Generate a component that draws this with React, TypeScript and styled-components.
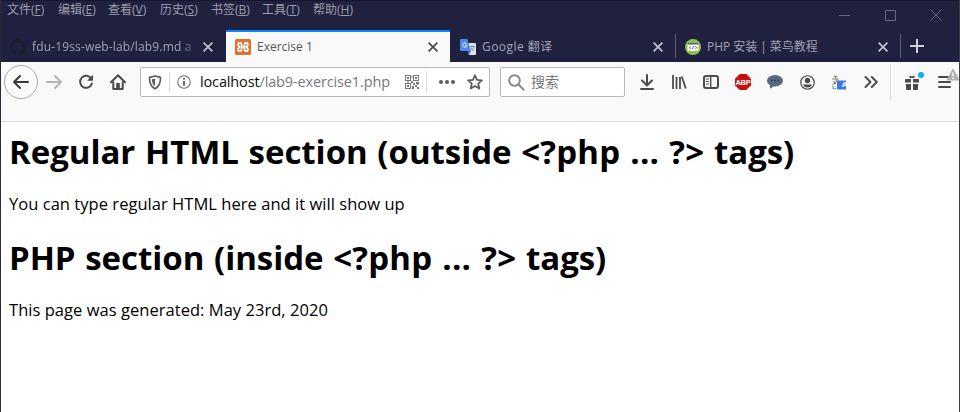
import React from 'react';
import styled, { createGlobalStyle } from 'styled-components';

const latin = '"Open Sans", "Noto Sans CJK SC", sans-serif';

const GlobalStyle = createGlobalStyle`
  body { margin: 0; background: #fff; font-family: ${latin}; overflow: hidden; }
  * { box-sizing: border-box; }
`;

const Window = styled.div`
  width: 960px;
  height: 412px;
  display: flex;
  flex-direction: column;
  background: #fff;
  border-left: 1px solid #2b2a38;
  border-right: 1px solid #3c3b48;
  overflow: hidden;
`;

const TitleBar = styled.div`
  height: 30px;
  display: flex;
  justify-content: space-between;
  background: #20213f;
  border-top: 1px solid #15162e;
`;

const MenuList = styled.div`
  display: flex;
  padding-left: 6px;
`;

const MenuItem = styled.span<{ $w: number }>`
  width: ${(p) => p.$w}px;
  height: 20px;
  line-height: 18px;
  font-size: 12px;
  color: #9d9dab;
  white-space: nowrap;
  u { text-underline-offset: 1px; }
`;

const WindowButtons = styled.div`
  display: flex;
  padding-top: 6px;
`;

const WindowButton = styled.div`
  width: 46px;
  height: 16px;
  display: flex;
  align-items: center;
  justify-content: center;
`;

const TabStrip = styled.div`
  height: 32px;
  display: flex;
  background: #20213f;
`;

const Tab = styled.div<{ $w: number; $active?: boolean; $divider?: boolean; $pl?: number }>`
  width: ${(p) => p.$w}px;
  height: 32px;
  display: flex;
  align-items: center;
  padding: 0 ${(p) => (p.$active ? 8 : 9)}px 0 ${(p) => p.$pl ?? 9}px;
  position: relative;
  background: ${(p) => (p.$active ? '#f9f9fa' : '#20213f')};
  color: ${(p) => (p.$active ? '#55555c' : '#a2a3b5')};
  border-top: 2px solid ${(p) => (p.$active ? '#0a84ff' : 'transparent')};
  ${(p) =>
    p.$divider &&
    `&::after { content: ''; position: absolute; right: 0; top: 2px; width: 1px; height: 24px; background: #5f6078; }`}
`;

const TabTitle = styled.span<{ $ls?: number; $fade?: boolean }>`
  flex: 1;
  min-width: 0;
  margin-left: 6px;
  font-size: 12px;
  line-height: 18px;
  letter-spacing: ${(p) => p.$ls ?? 0}px;
  white-space: nowrap;
  ${(p) => p.$fade && 'mask-image: linear-gradient(to right, #000 148px, transparent 168px);'}
`;

const CloseBox = styled.span`
  width: 18px;
  height: 18px;
  display: flex;
  align-items: center;
  justify-content: center;
`;

const NewTab = styled.div`
  width: 32px;
  display: flex;
  align-items: center;
  justify-content: center;
`;

const Toolbar = styled.div`
  height: 60px;
  display: flex;
  align-items: flex-start;
  background: #f9f9fa;
  border-bottom: 1px solid #dcdcde;
  padding-left: 3px;
`;

const ToolButton = styled.div<{ $w?: number }>`
  position: relative;
  flex: none;
  width: ${(p) => p.$w ?? 32}px;
  height: 40px;
  display: flex;
  align-items: center;
  justify-content: center;
`;

const BackCircle = styled.div`
  flex: none;
  width: 34px;
  height: 34px;
  border-radius: 50%;
  border: 1px solid #a9a9ab;
  background: #fcfcfc;
  display: flex;
  align-items: center;
  justify-content: center;
`;

const Field = styled.div<{ $w: number; $ml: number }>`
  flex: none;
  width: ${(p) => p.$w}px;
  height: 30px;
  margin: 5px 0 0 ${(p) => p.$ml}px;
  display: flex;
  align-items: center;
  background: #fff;
  border: 1px solid #b9b9bb;
  border-radius: 2px;
`;

const Slot = styled.span<{ $w: number; $pad?: number }>`
  flex: none;
  width: ${(p) => p.$w}px;
  padding-left: ${(p) => p.$pad ?? 0}px;
  display: flex;
  justify-content: center;
`;

const Divider = styled.span<{ $h: number }>`
  flex: none;
  width: 1px;
  height: ${(p) => p.$h}px;
  background: #dadadc;
`;

const Address = styled.span`
  flex: 1;
  min-width: 0;
  padding-left: 2px;
  font-size: 14.5px;
  line-height: 20px;
  letter-spacing: -0.14px;
  white-space: nowrap;
  color: #77777b;
  b { font-weight: 400; color: #0c0c0d; }
`;

const SearchHint = styled.span`
  font-size: 14px;
  line-height: 20px;
  color: #77777b;
`;

const Badge = styled.span`
  position: absolute;
  right: 5px;
  top: 10px;
  width: 6px;
  height: 6px;
  border-radius: 50%;
  background: #00b3f4;
`;

const Warning = styled.span`
  position: absolute;
  right: 0;
  top: 5px;
  height: 14px;
  display: flex;
`;

const Page = styled.main`
  flex: 1;
  padding: 0 8px;
  color: #000;
`;

const Heading = styled.h1<{ $mt: number }>`
  margin: ${(p) => p.$mt}px 0 0;
  font-size: 33px;
  line-height: 42px;
  font-weight: 700;
  letter-spacing: -0.05px;
  word-spacing: 1.2px;
  white-space: nowrap;
`;

const Code = styled.span`
  letter-spacing: 0.22px;
`;

const Para = styled.p<{ $mt: number }>`
  margin: ${(p) => p.$mt}px 0 0;
  font-size: 16.5px;
  line-height: 22px;
  letter-spacing: 0.04px;
  white-space: nowrap;
`;

const ink = '#4a4a4e';

const Close = ({ color }: { color: string }) => (
  <svg width="10" height="10" viewBox="0 0 10 10" fill="none" stroke={color} strokeWidth="1.7">
    <path d="M.6.6l8.8 8.8M9.4.6L.6 9.4" />
  </svg>
);

const Arrow = ({ color, flip }: { color: string; flip?: boolean }) => (
  <svg width="16" height="16" viewBox="0 0 16 16" fill="none" stroke={color} strokeWidth="2" strokeLinecap="round" strokeLinejoin="round">
    <path d={flip ? 'M1 8h14M9 2l6 6-6 6' : 'M15 8H1M7 2L1 8l6 6'} />
  </svg>
);

const GitHubIcon = () => (
  <svg width="16" height="16" viewBox="0 0 16 16" fill="#1b1f2b">
    <path d="M8 0a8 8 0 0 0-2.5 15.6c.4 0 .5-.2.5-.4v-1.4c-2.2.5-2.7-1-2.7-1-.4-.9-.9-1.200-.9-1.200-.7-.5.1-.5.1-.5.8.1 1.200.8 1.200.8.7 1.200 1.900.9 2.300.7.1-.5.3-.9.5-1.100-1.800-.2-3.600-.9-3.600-4 0-.9.3-1.600.8-2.100-.1-.2-.4-1 .1-2.100 0 0 .7-.2 2.200.8a7.500 7.500 0 0 1 4 0c1.500-1 2.200-.8 2.200-.8.4 1.100.2 1.900.1 2.100.5.6.8 1.300.8 2.100 0 3.100-1.900 3.700-3.700 3.900.3.300.6.800.6 1.500v2.200c0 .2.100.5.600.4A8 8 0 0 0 8 0z" />
  </svg>
);

const XamppIcon = () => (
  <svg width="16" height="16" viewBox="0 0 16 16">
    <rect width="16" height="16" rx="1.5" fill="#e0702c" />
    <g fill="none" stroke="#fff" strokeWidth="1.700" strokeLinejoin="round" strokeLinecap="round">
      <path d="M6.500 8H9.500" />
      <path d="M3 5.800V4.800L4 3.800H5.500L6.500 4.800V11.200L5.500 12.200H4L3 11.200V10.200L4.400 8z" />
      <path d="M13 5.800V4.800L12 3.800H10.500L9.500 4.800V11.200L10.500 12.200H12L13 11.200V10.200L11.600 8z" />
    </g>
  </svg>
);

const TranslateTabIcon = () => (
  <svg width="16" height="16" viewBox="0 0 16 16">
    <path d="M6 4h9a1 1 0 0 1 1 1v10a1 1 0 0 1-1 1H9z" fill="#dfe3ea" />
    <path d="M9.500 7.500h5.500M12 6.500v1M13.800 7.500c-.4 2-2 3.600-3.500 4.500M10.800 8.500c.6 1.500 1.800 2.800 3.200 3.700" fill="none" stroke="#7a8b95" strokeWidth=".9" />
    <path d="M1 0h6.500l3.300 12H1a1 1 0 0 1-1-1V1a1 1 0 0 1 1-1z" fill="#4a86ee" />
    <path d="M7.500 12h3.300L9 15.800z" fill="#3367d6" />
    <path d="M6.600 4.800A2.200 2.200 0 1 0 7 6.400H5" fill="none" stroke="#fff" strokeWidth="1" />
  </svg>
);

const RunoobIcon = () => (
  <svg width="16" height="16" viewBox="0 0 16 16">
    <circle cx="8" cy="8" r="8" fill="#8cc152" />
    <rect x="2.500" y="4" width="11" height="8" rx="1" fill="#fff" />
    <path d="M2.500 4h11v1.600h-11z" fill="#5a6670" />
    <path d="M5.800 7.200L4.200 8.700l1.600 1.500M10.200 7.200l1.600 1.500-1.600 1.500M8.600 7L7.400 10.400" fill="none" stroke="#4b5560" strokeWidth=".9" />
  </svg>
);

const ReloadIcon = () => (
  <svg width="16" height="16" viewBox="0 0 16 16" fill="none" stroke={ink} strokeWidth="2">
    <path d="M13.200 4.600A6 6 0 1 0 13.900 9.500" strokeLinecap="round" />
    <path d="M15 .8v6H9z" fill={ink} stroke="none" />
  </svg>
);

const HomeIcon = () => (
  <svg width="16" height="16" viewBox="0 0 16 16" fill="none" stroke={ink} strokeWidth="2" strokeLinecap="round" strokeLinejoin="round">
    <path d="M1 8.200L8 1.300l7 6.900M3.300 8.500V15h9.400V8.500" />
    <path d="M6.200 15V9h3.600v6z" fill={ink} stroke="none" />
  </svg>
);

const ShieldIcon = () => (
  <svg width="14" height="15" viewBox="0 0 14 15">
    <path d="M7 1L12.500 2.300c.2 5-.8 9-5.500 11.500C2.300 11.300 1.300 7.300 1.500 2.300z" fill="none" stroke="#5d5d61" strokeWidth="1.700" strokeLinejoin="round" />
    <path d="M7 3.500v7.600C4.400 9.300 3.900 7 3.900 4.200z" fill="#5d5d61" />
  </svg>
);

const InfoIcon = () => (
  <svg width="14" height="14" viewBox="0 0 14 14">
    <circle cx="7" cy="7" r="6.300" fill="none" stroke="#6e6e72" strokeWidth="1.100" />
    <path d="M7 6v4.800M7 3v1.700" stroke="#5d5d61" strokeWidth="1.800" />
  </svg>
);

const QrIcon = () => (
  <svg width="14" height="14" viewBox="0 0 14 14" fill="#77777b">
    <path fillRule="evenodd" d="M0 0h6v6H0zM1 1v4h4V1zM8 0h6v6H8zM9 1v4h4V1zM0 8h6v6H0zM1 9v4h4V9zM2 2h2v2H2zM10 2h2v2h-2zM2 10h2v2H2zM6.500 1h1v2h-1zM6 6h2v2H6zM8 8h2v2H8zM11 7h3v2h-3zM10 10h2v2h-2zM12 9h1v1h-1zM7 11h2v3H7zM12 12h2v2h-2zM2 6.500h2v1H2z" />
  </svg>
);

const DotsIcon = () => (
  <svg width="16" height="4" viewBox="0 0 16 4" fill="#5d5d61">
    <circle cx="2" cy="2" r="2" /><circle cx="8" cy="2" r="2" /><circle cx="14" cy="2" r="2" />
  </svg>
);

const StarIcon = () => (
  <svg width="16" height="16" viewBox="0 0 16 16" fill="none" stroke="#5d5d61" strokeWidth="1.800" strokeLinejoin="round">
    <path d="M8 1.300l2 4.500 4.900.5-3.700 3.300 1.100 4.900L8 12l-4.300 2.500 1.100-4.900L1.100 6.300 6 5.800z" />
  </svg>
);

const SearchIcon = () => (
  <svg width="17" height="17" viewBox="0 0 17 17" fill="none" stroke="#8b8b8e" strokeWidth="2" strokeLinecap="round">
    <circle cx="6.500" cy="6.500" r="5.300" />
    <path d="M10.500 10.500l5.200 5.200" />
  </svg>
);

const DownloadIcon = () => (
  <svg width="14" height="16" viewBox="0 0 14 16" fill="none" stroke={ink} strokeWidth="2" strokeLinecap="round" strokeLinejoin="round">
    <path d="M7 1v10M2 6.500l5 5 5-5M1 15h12" />
  </svg>
);

const LibraryIcon = () => (
  <svg width="16" height="14" viewBox="0 0 16 14" fill="none" stroke={ink}>
    <path d="M2 0v14M5.500 2v12M9 2v12M10.800 1.500l4 12" strokeWidth="1.800" />
  </svg>
);

const SidebarIcon = () => (
  <svg width="16" height="14" viewBox="0 0 16 14" fill="none" stroke={ink}>
    <rect x="1" y="1" width="14" height="12" rx="2" strokeWidth="2" />
    <path d="M7.700 1v12" strokeWidth="1.400" />
    <path d="M3 4h3M3 6.500h3M3 9h3" strokeWidth="1" />
  </svg>
);

const AbpText = styled.span`
  font: 700 7.5px "Liberation Sans", sans-serif;
  color: #fff;
  position: absolute;
  letter-spacing: -0.2px;
`;

const AbpIcon = () => (
  <>
    <svg width="16" height="16" viewBox="0 0 16 16">
      <path d="M4.700 0h6.600L16 4.700v6.600L11.300 16H4.700L0 11.300V4.700z" fill="#c70d0e" />
    </svg>
    <AbpText>ABP</AbpText>
  </>
);

const SpeechIcon = () => (
  <svg width="16" height="14" viewBox="0 0 16 14">
    <ellipse cx="8" cy="5.700" rx="8" ry="5.700" fill="#57697b" />
    <path d="M3 9v4.800L8 10.500z" fill="#57697b" />
    <g fill="#35424f"><circle cx="4.700" cy="5.500" r="1" /><circle cx="8" cy="5.500" r="1" /><circle cx="11.300" cy="5.500" r="1" /></g>
  </svg>
);

const AccountIcon = () => (
  <svg width="15" height="15" viewBox="0 0 16 16">
    <circle cx="8" cy="8" r="7.200" fill="none" stroke={ink} strokeWidth="1.300" />
    <circle cx="8" cy="5.800" r="2.900" fill={ink} />
    <path d="M3.300 10h9.400C12 12.300 10.400 13.200 8 13.200S4 12.300 3.300 10z" fill={ink} />
  </svg>
);

const Letter = styled.span`
  position: absolute;
  left: 17px;
  top: 18px;
  width: 9px;
  text-align: center;
  font: 700 8px/9px "Liberation Sans", sans-serif;
  color: #fff;
`;

const TranslateIcon = () => (
  <>
    <svg width="14" height="15" viewBox="0 0 14 15">
      <path d="M0 4h6.500M3 .8l.8 2.700M1.500 1.200h4M5 4.500C4.500 7 3 8.500.5 9.500M1.500 6c.8 1.200 1.500 2 2.500 2.500" fill="none" stroke="#8a8472" strokeWidth="1.100" />
      <rect x="5" y="5.500" width="9" height="9" fill="#3b78e7" />
      <path d="M1 10.500v3h3" fill="none" stroke="#6ba1ef" strokeWidth="1.200" />
    </svg>
    <Letter>A</Letter>
  </>
);

const OverflowIcon = () => (
  <svg width="14" height="12" viewBox="0 0 14 12" fill="none" stroke={ink} strokeWidth="1.900" strokeLinecap="round" strokeLinejoin="round">
    <path d="M1.500 1l5 5-5 5M7.800 1l5 5-5 5" />
  </svg>
);

const GiftIcon = () => (
  <svg width="14" height="15" viewBox="0 0 14 15" fill={ink}>
    <path d="M.5 4H6v3.500H0v-3zM8 4h5.500l.5.5v3H8zM1 9h5v6H2a1 1 0 0 1-1-1zM8 9h5v5a1 1 0 0 1-1 1H8zM4.500.5L7 1.500l2.500-1V3H4.500z" />
  </svg>
);

const MenuIcon = () => (
  <svg width="13" height="12" viewBox="0 0 13 12" stroke={ink} strokeWidth="2" strokeLinecap="round">
    <path d="M1 1h11M1 6h11M1 11h11" />
  </svg>
);

const menus: [string, string, number][] = [
  ['文件', 'F', 51], ['编辑', 'E', 50], ['查看', 'V', 52], ['历史', 'S', 51], ['书签', 'B', 51], ['工具', 'T', 51], ['帮助', 'H', 50],
];

export default function App() {
  return (
    <>
      <GlobalStyle />
      <Window>
        <TitleBar>
          <MenuList>
            {menus.map(([label, key, w]) => (
              <MenuItem key={key} $w={w}>{label}(<u>{key}</u>)</MenuItem>
            ))}
          </MenuList>
          <WindowButtons>
            <WindowButton><svg width="11" height="11" viewBox="0 0 11 11"><path d="M0 5.500h11" stroke="#686980" /></svg></WindowButton>
            <WindowButton><svg width="11" height="11" viewBox="0 0 11 11"><path d="M.5.5h10v10H.5z" fill="none" stroke="#686980" /></svg></WindowButton>
            <WindowButton><svg width="12" height="12" viewBox="0 0 12 12"><path d="M.5.5l11 11M11.500.5l-11 11" stroke="#686980" /></svg></WindowButton>
          </WindowButtons>
        </TitleBar>
        <TabStrip>
          <Tab $w={225}>
            <GitHubIcon /><TabTitle $fade $ls={0.15}>fdu-19ss-web-lab/lab9.md a</TabTitle>
            <CloseBox><Close color="#c3c3cf" /></CloseBox>
          </Tab>
          <Tab $w={224} $active>
            <XamppIcon /><TabTitle>Exercise 1</TabTitle>
            <CloseBox><Close color="#4a4a4e" /></CloseBox>
          </Tab>
          <Tab $w={226} $divider $pl={10}>
            <TranslateTabIcon /><TabTitle $ls={0.45}>Google 翻译</TabTitle>
            <CloseBox><Close color="#c3c3cf" /></CloseBox>
          </Tab>
          <Tab $w={225} $divider>
            <RunoobIcon /><TabTitle $ls={-0.05}>PHP 安装 | 菜鸟教程</TabTitle>
            <CloseBox><Close color="#c3c3cf" /></CloseBox>
          </Tab>
          <NewTab><svg width="14" height="14" viewBox="0 0 14 14"><path d="M7 0v14M0 7h14" stroke="#d0d0da" strokeWidth="2" /></svg></NewTab>
        </TabStrip>
        <Toolbar>
          <ToolButton $w={34}><BackCircle><Arrow color="#3a3a3e" /></BackCircle></ToolButton>
          <ToolButton><Arrow color="#b5b5b7" flip /></ToolButton>
          <ToolButton><ReloadIcon /></ToolButton>
          <ToolButton><HomeIcon /></ToolButton>
          <Field $w={350} $ml={6}>
            <Slot $w={28}><ShieldIcon /></Slot>
            <Divider $h={20} />
            <Slot $w={28}><InfoIcon /></Slot>
            <Address><b>localhost</b>/lab9-exercise1.php</Address>
            <Slot $w={28}><QrIcon /></Slot>
            <Divider $h={22} />
            <Slot $w={34} $pad={6}><DotsIcon /></Slot>
            <Slot $w={28}><StarIcon /></Slot>
          </Field>
          <Field $w={125} $ml={10}>
            <Slot $w={30}><SearchIcon /></Slot>
            <SearchHint>搜索</SearchHint>
          </Field>
          <ToolButton $w={6} />
          <ToolButton><DownloadIcon /></ToolButton>
          <ToolButton><LibraryIcon /></ToolButton>
          <ToolButton><SidebarIcon /></ToolButton>
          <ToolButton><AbpIcon /></ToolButton>
          <ToolButton><SpeechIcon /></ToolButton>
          <ToolButton><AccountIcon /></ToolButton>
          <ToolButton><TranslateIcon /></ToolButton>
          <ToolButton><OverflowIcon /></ToolButton>
          <ToolButton $w={7}><Divider $h={36} /></ToolButton>
          <ToolButton $w={35}><GiftIcon /><Badge /></ToolButton>
          <ToolButton $w={30}>
            <MenuIcon />
            <Warning>
              <svg width="12" height="14" viewBox="0 0 12 14"><path d="M6 2l6 11H0z" fill="#b1b1b3" stroke="#b1b1b3" strokeLinejoin="round" /><path d="M6 5.500v3.800M6 10.500v1.500" stroke="#fff" strokeWidth="1.400" /></svg>
            </Warning>
          </ToolButton>
        </Toolbar>
        <Page>
          <Heading $mt={9}>Regular HTML section (outside <Code>&lt;?php ... ?&gt;</Code> tags)</Heading>
          <Para $mt={20}>You can type regular HTML here and it will show up</Para>
          <Heading $mt={22}>PHP section (inside <Code>&lt;?php ... ?&gt;</Code> tags)</Heading>
          <Para $mt={20}>This page was generated: May 23rd, 2020</Para>
        </Page>
      </Window>
    </>
  );
}
